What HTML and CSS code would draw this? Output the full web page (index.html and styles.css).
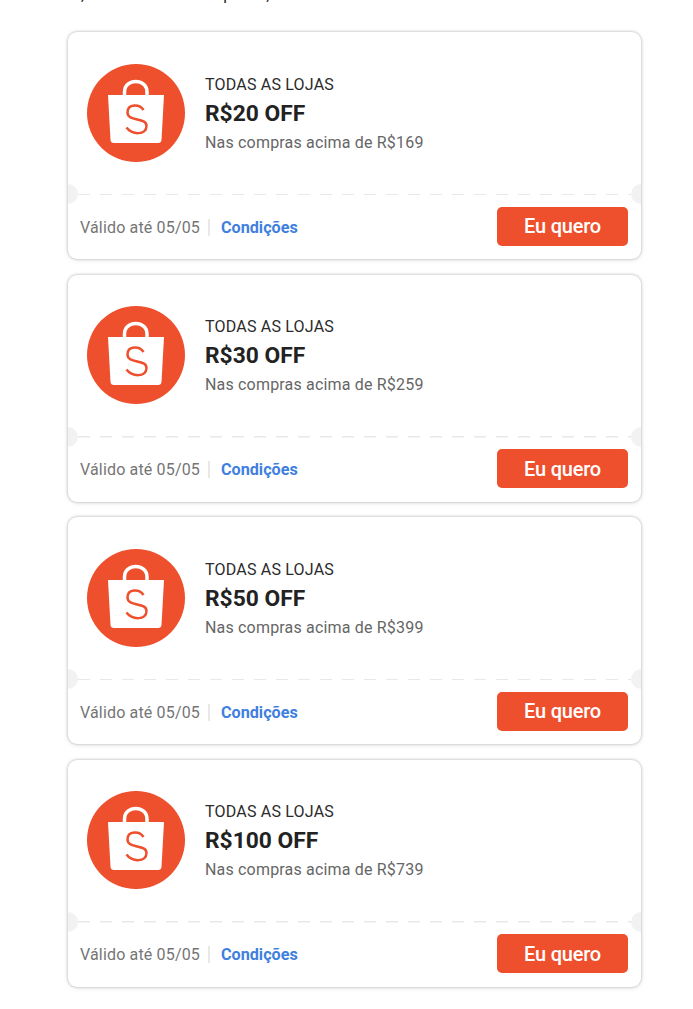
FILE: index.html
```html
<!DOCTYPE html>
<html lang="en">
<head>
    <meta charset="UTF-8">
    <meta name="viewport" content="width=device-width, initial-scale=1.0">
    <title>Cupons</title>
    <link rel="stylesheet" href="styles.css">
</head>
<body>
    <svg class="defs" width="0" height="0">
        <symbol id="shop-logo" viewBox="0 0 98 98">
            <circle cx="49" cy="49" r="49" fill="#ee4f2c"/>
            <path d="M21 31H77L74.500 76Q74.300 79 71 79H27Q23.700 79 23.500 76Z" fill="#fff"/>
            <path d="M37.500 31V28C37.500 14 60 14 60 28V31" fill="none" stroke="#fff" stroke-width="3.500"/>
            <path d="M56.500 46C53 40 40.500 39 40.500 48.500C40.500 58 59.500 53 59.500 62C59.500 71.500 45 71 39.500 63.500" fill="none" stroke="#ee4f2c" stroke-width="2.500"/>
        </symbol>
    </svg>

    <main class="coupons">
        <p class="intro"><span>,</span><span>p</span><span>,</span></p>

        <article class="coupon">
            <div class="coupon-top">
                <svg class="logo"><use href="#shop-logo"/></svg>
                <div class="info">
                    <div class="scope">TODAS AS LOJAS</div>
                    <div class="discount">R$20 OFF</div>
                    <div class="minimum">Nas compras acima de R$169</div>
                </div>
            </div>
            <div class="coupon-bottom">
                <span class="valid">Válido até 05/05</span>
                <a class="terms">Condições</a>
                <button class="want">Eu quero</button>
            </div>
        </article>

        <article class="coupon">
            <div class="coupon-top">
                <svg class="logo"><use href="#shop-logo"/></svg>
                <div class="info">
                    <div class="scope">TODAS AS LOJAS</div>
                    <div class="discount">R$30 OFF</div>
                    <div class="minimum">Nas compras acima de R$259</div>
                </div>
            </div>
            <div class="coupon-bottom">
                <span class="valid">Válido até 05/05</span>
                <a class="terms">Condições</a>
                <button class="want">Eu quero</button>
            </div>
        </article>

        <article class="coupon">
            <div class="coupon-top">
                <svg class="logo"><use href="#shop-logo"/></svg>
                <div class="info">
                    <div class="scope">TODAS AS LOJAS</div>
                    <div class="discount">R$50 OFF</div>
                    <div class="minimum">Nas compras acima de R$399</div>
                </div>
            </div>
            <div class="coupon-bottom">
                <span class="valid">Válido até 05/05</span>
                <a class="terms">Condições</a>
                <button class="want">Eu quero</button>
            </div>
        </article>

        <article class="coupon">
            <div class="coupon-top">
                <svg class="logo"><use href="#shop-logo"/></svg>
                <div class="info">
                    <div class="scope">TODAS AS LOJAS</div>
                    <div class="discount">R$100 OFF</div>
                    <div class="minimum">Nas compras acima de R$739</div>
                </div>
            </div>
            <div class="coupon-bottom">
                <span class="valid">Válido até 05/05</span>
                <a class="terms">Condições</a>
                <button class="want">Eu quero</button>
            </div>
        </article>
    </main>
</body>
</html>
```

FILE: styles.css
```css
body {
    font-family: Roboto, sans-serif;
    background-color: #fff;
    margin: 0;
    padding: 0;
}

.defs {
    display: block;
    height: 0;
}

.coupons {
    width: 573px;
    margin-left: 68px;
    padding-bottom: 22px;
    display: flex;
    flex-direction: column;
    gap: 15.5px;
}

/* only the tails of the line above show at the top of the page */
.intro {
    display: flex;
    height: 20px;
    margin: -15px 0 11.5px;
    padding-left: 13px;
    gap: 139px;
    color: #222;
    font-size: 16px;
    line-height: 20px;
}

.intro span:last-child {
    margin-left: -105px;
}

.coupon {
    position: relative;
    height: 227px;
    box-sizing: border-box;
    background-color: #fff;
    border-radius: 9px;
    box-shadow: 0 0 3px rgba(0, 0, 0, 0.3), 0 1px 6px rgba(0, 0, 0, 0.08);
    overflow: hidden;
}

/* notches on the dashed line */
.coupon::before,
.coupon::after {
    content: "";
    position: absolute;
    top: 152px;
    width: 20px;
    height: 20px;
    border-radius: 50%;
    background-color: #f2f2f2;
}

.coupon::before {
    left: -10px;
}

.coupon::after {
    right: -10px;
}

.coupon-top {
    height: 163px;
    box-sizing: border-box;
    margin: 0 10px;
    padding: 31.8px 9px 0;
    display: flex;
    gap: 20px;
    background: repeating-linear-gradient(90deg, #e8e8e8 0 12px, transparent 12px 22px) left bottom / 100% 1.5px no-repeat;
}

.logo {
    width: 98px;
    height: 98px;
    flex-shrink: 0;
}

.info {
    padding-top: 11px;
}

.scope {
    font-size: 16px;
    letter-spacing: 0.2px;
    line-height: 20px;
    color: #2b2b2b;
}

.discount {
    margin-top: 6px;
    font-size: 22.8px;
    font-weight: 700;
    line-height: 26px;
    color: #222;
}

.minimum {
    margin-top: 6px;
    font-size: 16px;
    letter-spacing: 0.18px;
    line-height: 20px;
    color: #666;
}

.coupon-bottom {
    display: flex;
    align-items: center;
    height: 62px;
    padding: 0 13px 0 12px;
}

.valid {
    margin-top: 2px;
    font-size: 16px;
    letter-spacing: 0.16px;
    color: #757575;
    padding-right: 8px;
    border-right: 2px solid #e8e8e8;
    line-height: 17px;
}

.terms {
    margin: 2px 0 0 11px;
    font-size: 16.2px;
    font-weight: 700;
    color: #3f7fe0;
}

.want {
    margin-left: auto;
    width: 131px;
    height: 39px;
    padding: 0;
    background-color: #ee4f2c;
    color: #fff;
    border: none;
    border-radius: 5px;
    font-family: inherit;
    font-size: 20px;
    font-weight: 500;
    letter-spacing: -0.2px;
    cursor: pointer;
}
```
